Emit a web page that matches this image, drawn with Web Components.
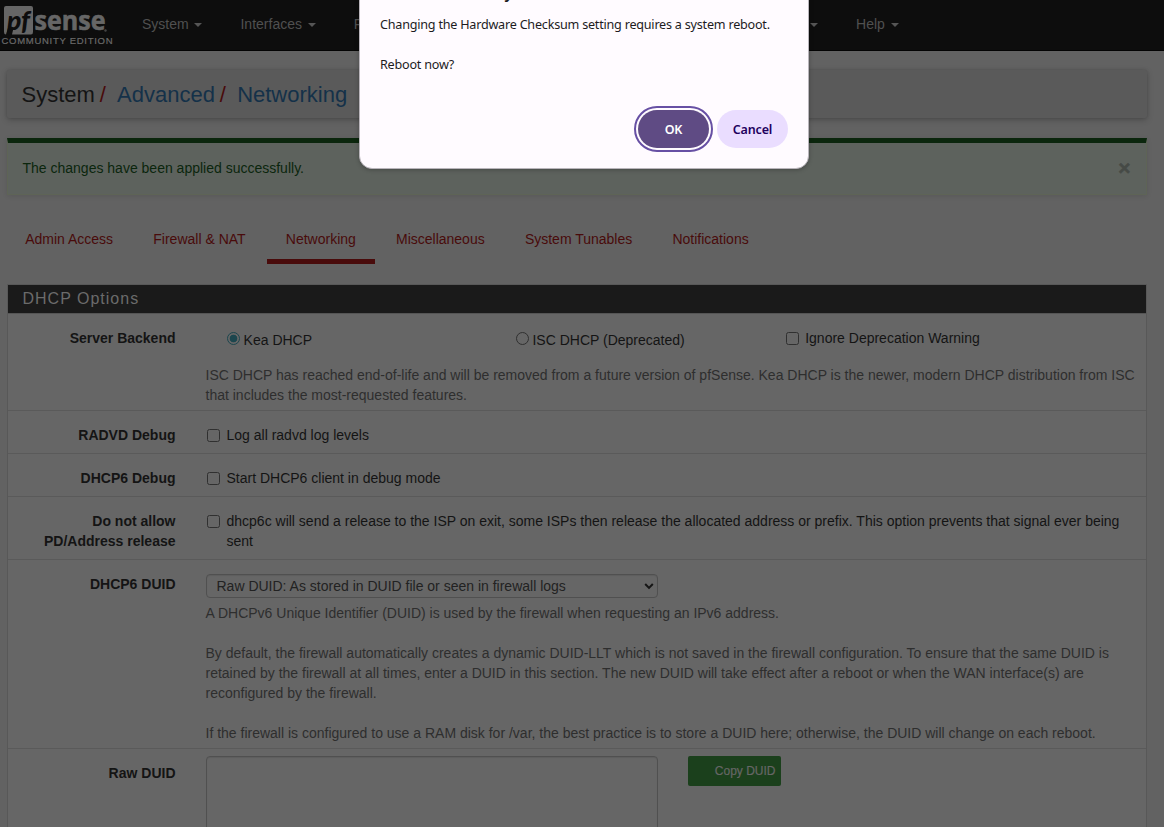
<!DOCTYPE html>
<html lang="en">
<head>
<meta charset="utf-8">
<title>System / Advanced / Networking</title>
<style>
html,body{margin:0;height:100%;overflow:hidden;background:#626262}
body{font:14px/20px "Liberation Sans",Arial,sans-serif;color:#141414}
</style>
</head>
<body>
<pf-page></pf-page>
<script>
function define(name, css, markup) {
  customElements.define(name, class extends HTMLElement {
    constructor() {
      super();
      const root = this.attachShadow({ mode: 'open' });
      const t = document.createElement('template');
      t.innerHTML = `<style>*{box-sizing:border-box}${css}</style>${markup}`;
      root.appendChild(t.content.cloneNode(true));
    }
  });
}

define('pf-logo',
  `:host{display:block;width:116px;height:50px;color:#666;overflow:hidden}
   svg{display:block;width:116px;height:50px}`,
  `<svg viewBox="0 0 116 50">
     <path d="M6 6H31Q33 6 33 8V32Q33 34.500 31 34.500H12L13.500 28H8L6 34.500Q4 34.500 4 32V8Q4 6 6 6Z" fill="#666"/>
     <text x="7" y="29.500" font-family="Lato" font-weight="900" font-style="italic" font-size="26" textLength="23" lengthAdjust="spacingAndGlyphs" fill="#0d0d0d">pf</text>
     <text x="34.500" y="29.800" font-family="Open Sans" font-weight="700" font-size="26" textLength="71" lengthAdjust="spacingAndGlyphs" fill="#666" stroke="#666" stroke-width=".6">sense</text>
     <circle cx="105.500" cy="30.500" r="1.200" fill="#444"/>
     <text x="1.500" y="44" font-family="Liberation Sans" font-size="9.500" textLength="111" fill="#6a6a6a" stroke="#6a6a6a" stroke-width=".2">COMMUNITY EDITION</text>
   </svg>`);

define('pf-nav-item',
  `:host{display:flex;align-items:center;gap:5.800px;color:#505050;white-space:nowrap;margin-right:38px}
   i{width:0;height:0;border:4px solid transparent;border-top-color:#555;border-bottom:0;margin-top:1px}
   :host([bare]) i{display:none}`,
  `<slot></slot><i></i>`);

define('pf-navbar',
  `:host{display:flex;height:51px;background:#0d0d0d;border-bottom:1px solid #030303}
   nav{display:flex;align-items:center;width:756.700px;margin-left:26px;height:48px}
   .push{margin-left:auto}.last{margin-right:0}`,
  `<pf-logo></pf-logo><nav>
   <pf-nav-item>System</pf-nav-item><pf-nav-item>Interfaces</pf-nav-item><pf-nav-item bare>F</pf-nav-item>
   <pf-nav-item class="push"></pf-nav-item><pf-nav-item class="last">Help</pf-nav-item></nav>`);

define('pf-breadcrumb',
  `:host{display:flex;align-items:center;height:48px;margin:19px 17px 0 7px;padding:1px 0 0 14.500px;background:#5a5a5a;border-radius:2px;
     box-shadow:0 2px 6px rgba(0,0,0,.22),0 0 3px rgba(0,0,0,.12);font-size:22px;line-height:27px;white-space:nowrap}
   a{color:#143149}b{font-weight:400;color:#490b0b;margin:0 11.200px 0 4.900px}`,
  `<span>System</span><b>/</b><a>Advanced</a><b>/</b><a>Networking</a>`);

define('pf-alert',
  `:host{display:flex;justify-content:space-between;align-items:center;height:57px;margin:20px 17px 0 7px;padding:0 15.500px 2px 14.500px;
     background:#5d625d;border:1px solid #5e6456;border-top:5px solid #0b260d;color:#0b260d;box-shadow:0 1px 5px rgba(0,0,0,.1)}
   button{all:unset;font:bold 21px/20px "Liberation Sans";color:#464a46;-webkit-text-stroke:.5px #464a46}`,
  `<span><slot></slot></span><button>×</button>`);

define('pf-tab',
  `:host{display:block;height:45px;padding:10px 19.200px 0;margin-right:1.800px;color:#490b0b;white-space:nowrap;border-bottom:5px solid transparent}
   :host([active]){border-color:#490b0b}`,
  `<slot></slot>`);

define('pf-tabs',
  `:host{display:flex;margin:24px 0 20px 6px}`,
  `<slot></slot>`);

define('pf-check',
  `:host{display:flex;gap:6.500px;align-items:flex-start}
   i{flex:none;width:13px;height:13px;margin:4px 0 0 1.500px;border:1px solid #303030;border-radius:2.500px}
   :host([radio]) i{border-radius:50%;margin-top:2px}
   :host([radio]){gap:3.800px}
   :host([radio]) i{margin-left:0}
   :host([on]) i{border-color:#1c464e;background:radial-gradient(circle,#1c464e 3.500px,transparent 4.200px)}`,
  `<i></i><span><slot></slot></span>`);

define('pf-row',
  `:host{display:grid;grid-template-columns:167.500px 1fr;column-gap:30px;padding:14px 11px 5px 0;border-bottom:1px solid #5a5a5a}
   :host([simple]){padding-bottom:8px}
   :host([last]){border-bottom:0;padding-top:7px}
   .l{font-weight:700;text-align:right;white-space:pre-line}
   :host([last]) .l{padding-top:7px}`,
  `<div class="l"><slot name="label"></slot></div><div><slot></slot></div>`);

define('pf-help', `:host{display:block;color:#2e2e2e}`, `<slot></slot>`);

define('pf-backend',
  `:host{display:grid;grid-template-columns:288.900px 268.500px auto;padding-left:21.300px;height:37px;white-space:nowrap}
   pf-check[radio]{padding-top:2px}`,
  `<pf-check radio on>Kea DHCP</pf-check><pf-check radio>ISC DHCP (Deprecated)</pf-check><pf-check>Ignore Deprecation Warning</pf-check>`);

define('pf-select',
  `:host{display:flex;justify-content:space-between;align-items:center;width:452px;height:24px;margin-bottom:5px;padding:0 3px 0 10px;
     border:1px solid #505050;border-radius:4px;color:#222;box-shadow:inset 0 1px 1px rgba(0,0,0,.08)}
   svg{width:10px;height:10px}`,
  `<slot></slot><svg viewBox="0 0 10 10"><path d="M1.200 3L5 6.900L8.800 3" fill="none" stroke="#151515" stroke-width="2"/></svg>`);

define('pf-duid',
  `:host{display:flex;align-items:flex-start;gap:30px}
   .area{width:452px;height:110px;border:1px solid #505050;border-radius:4px;box-shadow:inset 0 1px 1px rgba(0,0,0,.08)}
   button{all:unset;box-sizing:border-box;width:93px;height:30px;padding-right:5px;text-align:right;background:#1b401c;border-radius:2px;color:#666;font:12px/29px "Liberation Sans";-webkit-text-stroke:.2px #666;white-space:nowrap}`,
  `<div class="area"></div><button>Copy DUID</button>`);

define('pf-panel',
  `:host{display:block;margin:0 17px 0 7px;border:1px solid #585858;background:#666}
   h2{margin:0;height:29px;padding-left:14.500px;background:#1a1a1a;border-bottom:1px solid #555;color:#6b6b6b;font:400 16px/27px "Liberation Sans";letter-spacing:1px}`,
  `<h2><slot name="title"></slot></h2><slot></slot>`);

define('pf-dialog',
  `:host{position:absolute;left:359px;top:-36px;width:450px;height:205px;background:#fffbff;border:1px solid #b9b5bb;border-radius:0 0 13px 13px;
     padding:16px 20px 20px;display:flex;flex-direction:column;color:#1d1b1e;font:13px/20px "Noto Sans",sans-serif;box-shadow:0 1px 4px rgba(0,0,0,.25)}
   h1{margin:0 0 12px;font:600 16px/22px "Noto Sans";letter-spacing:-.1px;white-space:pre}
   p{margin:0 0 20px;white-space:nowrap;letter-spacing:-.22px;font-size:12.600px}
   .b{display:flex;justify-content:flex-end;gap:8px;margin-top:auto}
   button{all:unset;box-sizing:border-box;width:71px;height:38px;border-radius:19px;text-align:center;font:600 12.500px/39px "Noto Sans";letter-spacing:-.15px;background:#eaddff;color:#21005d}
   .ok{background:#5f4b84;color:#fff;outline:2px solid #6750a4;outline-offset:2px}`,
  `<h1>192.168.100.1 says</h1><p>Changing the Hardware Checksum setting requires a system reboot.</p><p>Reboot now?</p>
   <div class="b"><button class="ok">OK</button><button>Cancel</button></div>`);

define('pf-page',
  `:host{display:block;position:relative;width:1164px;height:827px;overflow:hidden;background:#626262}`,
  `<pf-navbar></pf-navbar>
   <pf-breadcrumb></pf-breadcrumb>
   <pf-alert>The changes have been applied successfully.</pf-alert>
   <pf-tabs><pf-tab>Admin Access</pf-tab><pf-tab>Firewall &amp; NAT</pf-tab><pf-tab active>Networking</pf-tab><pf-tab>Miscellaneous</pf-tab><pf-tab>System Tunables</pf-tab><pf-tab>Notifications</pf-tab></pf-tabs>
   <pf-panel><span slot="title">DHCP Options</span>
     <pf-row><span slot="label">Server Backend</span><pf-backend></pf-backend>
       <pf-help>ISC DHCP has reached end-of-life and will be removed from a future version of pfSense. Kea DHCP is the newer, modern DHCP distribution from ISC that includes the most-requested features.</pf-help></pf-row>
     <pf-row simple><span slot="label">RADVD Debug</span><pf-check>Log all radvd log levels</pf-check></pf-row>
     <pf-row simple><span slot="label">DHCP6 Debug</span><pf-check>Start DHCP6 client in debug mode</pf-check></pf-row>
     <pf-row simple><span slot="label">Do not allow<br>PD/Address release</span><pf-check>dhcp6c will send a release to the ISP on exit, some ISPs then release the allocated address or prefix. This option prevents that signal ever being sent</pf-check></pf-row>
     <pf-row><span slot="label">DHCP6 DUID</span><pf-select>Raw DUID: As stored in DUID file or seen in firewall logs</pf-select>
       <pf-help>A DHCPv6 Unique Identifier (DUID) is used by the firewall when requesting an IPv6 address.<br><br>By default, the firewall automatically creates a dynamic DUID-LLT which is not saved in the firewall configuration. To ensure that the same DUID is retained by the firewall at all times, enter a DUID in this section. The new DUID will take effect after a reboot or when the WAN interface(s) are reconfigured by the firewall.<br><br>If the firewall is configured to use a RAM disk for /var, the best practice is to store a DUID here; otherwise, the DUID will change on each reboot.</pf-help></pf-row>
     <pf-row last><span slot="label">Raw DUID</span><pf-duid></pf-duid></pf-row>
   </pf-panel>
   <pf-dialog></pf-dialog>`);
</script>
</body>
</html>
